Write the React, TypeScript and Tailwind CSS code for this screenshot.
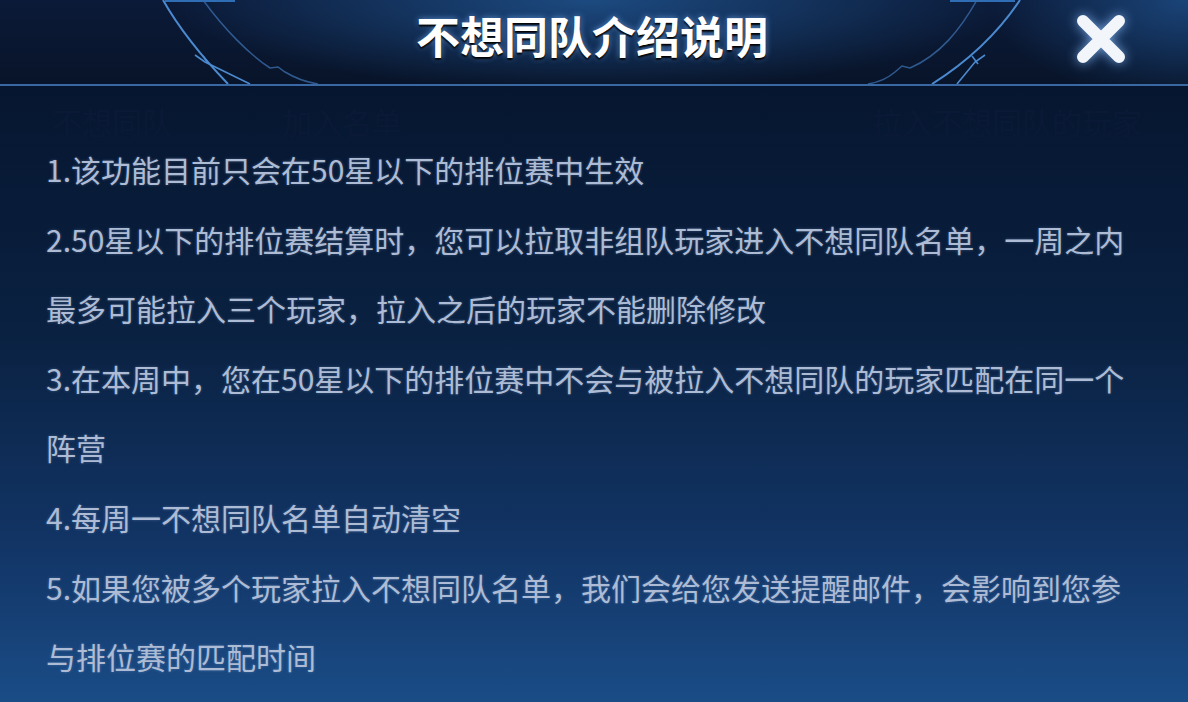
import React from "react";

const lines = [
  "1.该功能目前只会在50星以下的排位赛中生效",
  "2.50星以下的排位赛结算时，您可以拉取非组队玩家进入不想同队名单，一周之内",
  "最多可能拉入三个玩家，拉入之后的玩家不能删除修改",
  "3.在本周中，您在50星以下的排位赛中不会与被拉入不想同队的玩家匹配在同一个",
  "阵营",
  "4.每周一不想同队名单自动清空",
  "5.如果您被多个玩家拉入不想同队名单，我们会给您发送提醒邮件，会影响到您参",
  "与排位赛的匹配时间",
];

function LeftOrnament() {
  return (
    <svg className="absolute left-[140px] top-0 h-[84px] w-[200px]" viewBox="0 0 200 84" fill="none">
      <rect x="25" y="0" width="70" height="2" fill="#2f6db5" />
      <path d="M23 0 C 40 30, 65 60, 88 84" stroke="#4c8ad0" strokeWidth="2" />
      <path d="M55 55 L 65 62 L 110 84" stroke="#4c8ad0" strokeWidth="1.6" />
      <path d="M63 56 L 68 63" stroke="#4c8ad0" strokeWidth="1.6" />
      <path d="M63 0 C 85 30, 110 55, 130 68 L 138 67 L 145 72 C 155 78, 165 82, 178 84" stroke="#3a6aa6" strokeWidth="1.5" strokeOpacity="0.8" />
    </svg>
  );
}

function RightOrnament() {
  return (
    <svg className="absolute left-[850px] top-0 h-[84px] w-[200px]" viewBox="0 0 200 84" fill="none">
      <rect x="100" y="0" width="65" height="2" fill="#2f6db5" />
      <path d="M170 0 C 150 30, 120 60, 82 84" stroke="#4c8ad0" strokeWidth="2" />
      <path d="M135 55 L 125 62 L 107 84" stroke="#4c8ad0" strokeWidth="1.6" />
      <path d="M122 56 L 128 64" stroke="#4c8ad0" strokeWidth="1.6" />
      <path d="M127 0 C 110 30, 90 55, 60 68 L 52 66 L 45 72 C 38 78, 30 82, 18 84" stroke="#3a6aa6" strokeWidth="1.5" strokeOpacity="0.8" />
    </svg>
  );
}

function CloseIcon() {
  return (
    <svg viewBox="0 0 52 52" className="h-[52px] w-[52px] drop-shadow-[0_0_6px_rgba(140,190,255,0.8)]">
      <path d="M8 8 L44 44 M44 8 L8 44" stroke="#f2f6fb" strokeWidth="12" strokeLinecap="round" />
    </svg>
  );
}

export default function App() {
  return (
    <div
      className="flex h-[702px] w-[1188px] flex-col overflow-hidden bg-[#071530]"
      style={{ fontFamily: '"Noto Sans CJK SC", "Noto Sans", sans-serif' }}
    >
      <header className="relative h-[84px] shrink-0 overflow-hidden bg-[radial-gradient(ellipse_420px_90px_at_590px_0px,#1c4a80,transparent),radial-gradient(ellipse_200px_100px_at_1188px_0px,#1a4478,transparent),linear-gradient(#0b1a38,#081429)]">
        <LeftOrnament />
        <RightOrnament />
        <div className="flex h-full items-center justify-center pb-[14px] pr-[4px]">
          <h1 className="text-[44px] font-bold leading-none text-white [text-shadow:0_2px_2px_#000,0_0_6px_rgba(120,180,255,0.7)]">
            不想同队介绍说明
          </h1>
        </div>
        <div className="absolute right-[61px] top-[13px]">
          <CloseIcon />
        </div>
      </header>
      <div className="h-[2px] shrink-0 bg-[#3a68a3]" />
      <main className="relative flex-1 bg-[linear-gradient(#061630_0%,#0a2141_40%,#123566_75%,#1a4c86_100%)] px-[46px] pt-[49px]">
        <div className="pointer-events-none absolute left-[52px] top-[20px] flex w-[1090px] text-[30px] leading-[30px] text-[#0a1a36]">
          <span>不想同队</span>
          <span className="ml-[110px]">加入名单</span>
          <span className="ml-auto">拉入不想同队的玩家</span>
        </div>
        {lines.map((t, i) => (
          <p
            key={i}
            className="relative whitespace-nowrap text-[30px] leading-[69.6px] text-[#adbcd4] [text-shadow:0_0_3px_rgba(150,180,230,0.35)]"
          >
            {t}
          </p>
        ))}
      </main>
    </div>
  );
}
